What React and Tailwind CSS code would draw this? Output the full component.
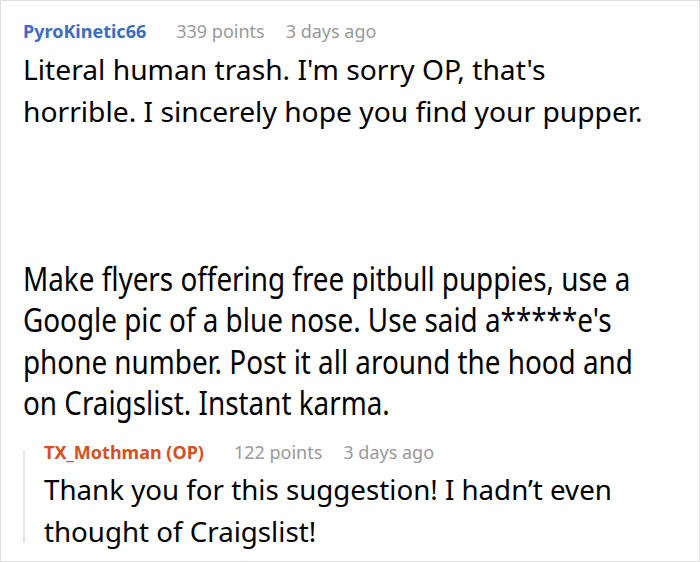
import React from 'react';

const comments = {
  parent: {
    author: 'PyroKinetic66',
    points: '339 points',
    time: '3 days ago',
    lines: ["Literal human trash. I'm sorry OP, that's", 'horrible. I sincerely hope you find your pupper.'],
  },
  suggestion: [
    'Make flyers offering free pitbull puppies, use a',
    "Google pic of a blue nose. Use said a*****e's",
    'phone number. Post it all around the hood and',
    'on Craigslist. Instant karma.',
  ],
  reply: {
    author: 'TX_Mothman (OP)',
    points: '122 points',
    time: '3 days ago',
    lines: ['Thank you for this suggestion! I hadn\u2019t even', 'thought of Craigslist!'],
  },
};

function Meta({ author, points, time, color }) {
  return (
    <div className="flex items-center h-[24px] text-[18px] leading-[24px] whitespace-nowrap">
      <span className={`font-bold ${color}`}>{author}</span>
      <span className="ml-[30px] text-[#999999]">{points}</span>
      <span className="ml-[21px] text-[#999999]">{time}</span>
    </div>
  );
}

function Lines({ lines }) {
  return lines.map((line) => (
    <span key={line} className="block whitespace-nowrap">
      {line}
    </span>
  ));
}

export default function App() {
  return (
    <div
      className="w-[700px] h-[562px] overflow-hidden bg-white border border-[#e0e0e0] pl-[22px] pt-[18px] text-black"
      style={{ fontFamily: '"Noto Sans", "Open Sans", sans-serif' }}
    >
      <Meta {...comments.parent} color="text-[#3b6ec0]" />
      <p className="mt-[6px] text-[27px] leading-[42px] origin-left scale-x-[1.045]">
        <Lines lines={comments.parent.lines} />
      </p>

      <p className="mt-[125px] text-[32px] leading-[41.3px] origin-left scale-x-[0.87]">
        <Lines lines={comments.suggestion} />
      </p>

      <div className="flex mt-[17px]">
        <div className="w-[2px] mt-[11px] mb-[9px] bg-[#e6e6e6]" />
        <div className="ml-[19px]">
          <Meta {...comments.reply} color="text-[#d84f1c]" />
          <p className="mt-[4px] text-[27.7px] leading-[42px]">
            <Lines lines={comments.reply.lines} />
          </p>
        </div>
      </div>
    </div>
  );
}
